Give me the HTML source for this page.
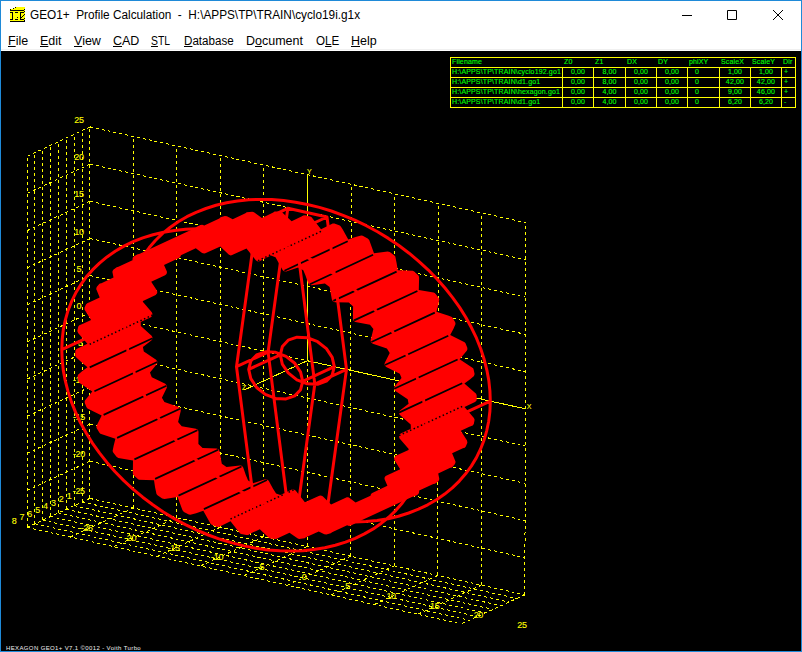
<!DOCTYPE html>
<html><head><meta charset="utf-8"><style>
html,body{margin:0;padding:0}
body{width:802px;height:652px;overflow:hidden;position:relative;background:#000;font-family:"Liberation Sans",sans-serif}
#tb{position:absolute;left:0;top:0;width:802px;height:51px;background:#fff}
.t{position:absolute;white-space:pre;color:#000;font-size:12px;line-height:14px}
.m{position:absolute;top:34px;white-space:pre;color:#000;font-size:12.5px;line-height:14px}
.u{text-decoration:underline;text-underline-offset:1px}
#tbl{position:absolute;left:450px;top:57px}
svg{position:absolute;left:0;top:0}
.bd{position:absolute;background:#1f8ad8}
</style></head><body>
<div id="tb"></div>
<svg width="802" height="652" viewBox="0 0 802 652">
<rect x="1" y="51" width="800" height="600" fill="#000"/>
<path d="M89.8,498.4L90,126.9M133.2,508L133.4,136.4M176.7,517.6L176.9,146M220.1,527.3L220.4,155.5M263.6,536.9L263.9,165.1M307.1,546.5L307.5,174.7M350.6,556.2L351.1,184.2M394.1,565.9L394.6,193.8M437.7,575.5L438.3,203.4M481.3,585.2L481.9,213M524.9,594.8L525.6,222.6M89.8,498.4L524.9,594.8M89.9,461.3L524.9,557.7M89.9,424.2L525,520.5M89.9,387L525.1,483.3M89.9,349.9L525.1,446.1M89.9,312.8L525.2,408.8M89.9,275.6L525.3,371.6M89.9,238.5L525.4,334.3M89.9,201.3L525.4,297.1M90,164.1L525.5,259.8M90,126.9L525.6,222.6M89.8,498.4L90,126.9M82,502L82.1,130.6M74.1,505.6L74.2,134.3M66.3,509.3L66.4,138M58.4,512.9L58.5,141.7M50.6,516.5L50.7,145.3M42.7,520.2L42.8,149M34.9,523.8L34.9,152.7M27.1,527.4L27.1,156.4M89.8,498.4L27.1,527.4M89.9,461.3L27.1,490.4M89.9,424.2L27.1,453.3M89.9,387L27.1,416.2M89.9,349.9L27.1,379.1M89.9,312.8L27.1,342M89.9,275.6L27.1,304.9M89.9,238.5L27.1,267.8M89.9,201.3L27.1,230.7M90,164.1L27.1,193.5M90,126.9L27.1,156.4M89.8,498.4L524.9,594.8M82,502L516.9,598.5M74.1,505.6L509,602.1M66.3,509.3L501.1,605.7M58.4,512.9L493.1,609.4M50.6,516.5L485.2,613M42.7,520.2L477.3,616.6M34.9,523.8L469.4,620.3M27.1,527.4L461.4,623.9M89.8,498.4L27.1,527.4M133.2,508L70.4,537M176.7,517.6L113.8,546.7M220.1,527.3L157.1,556.3M263.6,536.9L200.5,565.9M307.1,546.5L244,575.6M350.6,556.2L287.4,585.2M394.1,565.9L330.9,594.9M437.7,575.5L374.4,604.5M481.3,585.2L417.9,614.2M524.9,594.8L461.4,623.9" stroke="#ff0" stroke-width="1" stroke-dasharray="3 3" fill="none" shape-rendering="crispEdges"/>
<path d="M307.3,360.7L525.2,408.8M307.3,360.7L307.5,174.7M307.3,360.7L244.1,390" stroke="#ff0" stroke-width="1" fill="none" shape-rendering="crispEdges"/>
<g fill="#ff0" stroke="#ff0" stroke-width="0.1" font-size="9" letter-spacing="-0.35" font-family="Liberation Sans, sans-serif"><text x="78.8" y="494.4" text-anchor="middle">-25</text><text x="78.9" y="457.3" text-anchor="middle">-20</text><text x="78.9" y="420.2" text-anchor="middle">-15</text><text x="78.9" y="383" text-anchor="middle">-10</text><text x="78.9" y="345.9" text-anchor="middle">-5</text><text x="78.9" y="308.8" text-anchor="middle">0</text><text x="78.9" y="271.6" text-anchor="middle">5</text><text x="78.9" y="234.5" text-anchor="middle">10</text><text x="78.9" y="197.3" text-anchor="middle">15</text><text x="79" y="160.1" text-anchor="middle">20</text><text x="79" y="122.9" text-anchor="middle">25</text><text x="69" y="498.5" text-anchor="middle">1</text><text x="61.1" y="502.1" text-anchor="middle">2</text><text x="53.3" y="505.8" text-anchor="middle">3</text><text x="45.4" y="509.4" text-anchor="middle">4</text><text x="37.6" y="513" text-anchor="middle">5</text><text x="29.7" y="516.7" text-anchor="middle">6</text><text x="21.9" y="520.3" text-anchor="middle">7</text><text x="14.1" y="523.9" text-anchor="middle">8</text><text x="86.8" y="531.4" text-anchor="middle">-25</text><text x="130.2" y="541" text-anchor="middle">-20</text><text x="173.7" y="550.6" text-anchor="middle">-15</text><text x="217.1" y="560.3" text-anchor="middle">-10</text><text x="260.6" y="569.9" text-anchor="middle">-5</text><text x="304.1" y="579.5" text-anchor="middle">0</text><text x="347.6" y="589.2" text-anchor="middle">5</text><text x="391.1" y="598.9" text-anchor="middle">10</text><text x="434.7" y="608.5" text-anchor="middle">15</text><text x="478.3" y="618.2" text-anchor="middle">20</text><text x="521.9" y="627.8" text-anchor="middle">25</text><text x="526.7" y="409.3" font-size="7" letter-spacing="0">X</text><text x="307" y="173.7" font-size="7" letter-spacing="0">Y</text><text x="242.1" y="389.5" font-size="7" letter-spacing="0">Z</text></g>
<path d="M77,348.8L75.8,349.8L75.3,351L75.2,355.2L75.6,356.7L80.1,361L87.5,367.3L81.8,371.5L78,374.8L77.5,376.8L78.4,381.3L79.6,383L92.3,391.5L85.1,400.2L84.6,401.5L84.8,403.1L86.5,407.3L87.5,408.6L101.7,415.5L96.7,425.6L96.4,426.9L96.6,428L99.3,432.6L100.4,433.7L115.4,438.8L113.6,445.9L112.6,451.1L113.2,452.6L116.5,456.8L118.3,457.9L133,460.6L132.8,473L133,474.2L133.7,475.3L137.8,479.1L139,479.7L154,480.2L155.1,487.5L156.5,493.9L157.5,495.2L162.2,498.5L164.5,498.9L177.6,497.1L182.5,510.3L183.9,511.9L188.9,514.6L190.4,514.8L196.1,513.3L203.3,510.8L209,521.1L210.7,523.9L211.7,524.8L217.2,526.9L218.8,527L230.5,521.2L240.1,533.4L241.2,534L246.4,535.1L248.3,534.9L249.9,533.8L259.8,529.2L269.1,538L270.2,538.6L271.8,538.8L275.5,539L276.8,538.8L278.2,537.9L289.5,532.7L297.4,538.3L299.1,538.9L304.6,538.2L306,537.2L318.7,531.4L324.4,534.3L326.4,534.4L330.7,533.3L332.1,532.2L347.1,525.3L349.1,525.9L350.9,525.6L354.5,523.8L355.6,522.9L412.4,496.8L413.8,496.6L416.2,495.5L417.9,494.6L418.7,493.6L419.1,492.3L419.2,490.6L433.3,484.1L435,483.8L438.4,481.2L439.1,480.1L439.3,478.8L438.2,473.4L450.3,467.8L451.9,467.4L454.4,464.7L455.4,463.1L455.5,461.5L452.1,453.3L462.9,448.3L464.8,447.7L465.8,446.5L467.4,442.8L467,440.6L460.8,430.8L469.4,426.8L472.7,425.6L473.8,424.1L474.5,420.6L474.5,419.3L473.9,417.9L464.5,407L475,402L476.2,401L476.7,399.9L476.7,395.4L476.1,393.8L464.4,383.4L470.2,379.3L474,376L474.6,373.9L473.7,369.7L473.3,368.6L472.4,367.7L459.6,359.2L466.8,350.7L467.4,349.2L467.3,347.8L465.5,343.3L464.6,342.2L450.2,335.1L453.5,328.8L455.5,324L455.2,322.3L452.4,317.5L451.3,316.7L448.7,315.7L436.4,311.7L438.2,305.3L439.3,299.6L438.7,297.9L435.7,294L434.7,293.1L433.6,292.6L418.8,289.9L419.1,278.3L419,276.7L418.5,275.6L414.2,271.5L412.8,270.8L397.8,270.2L396.6,262.9L395.3,256.5L394.4,255.4L389.8,252.1L387.6,251.5L374,253.3L369.2,240L367.7,238.4L362.7,235.8L361.2,235.5L355.5,237.1L348.3,239.6L342.6,229.3L340.8,226.5L339.8,225.6L334.4,223.5L332.7,223.4L321,229.2L311.4,217L310.2,216.4L305.1,215.3L303.2,215.5L301.5,216.6L291.6,221.2L282.3,212.4L281.1,211.8L279.6,211.7L275.9,211.4L274.6,211.6L273.2,212.6L261.9,217.9L254,212.2L252.3,211.7L246.7,212.3L245.4,213.3L232.7,219.2L226.9,216.3L224.9,216.1L220.6,217.3L219.3,218.4L204.3,225.4L202.2,224.8L200.4,225L196.8,226.8L195.7,227.7L139.2,254.1L137.7,254.3L134,256.2L132.7,257.7L132.5,260.3L118.4,266.8L116.7,267.2L113.3,269.8L112.6,270.9L112.4,272.1L113.5,277.5L101.4,283.2L99.9,283.5L99,284.2L96.7,287.1L96.2,289L99.7,297.6L89,302.6L87.6,302.9L86.1,304.2L84.5,307.8L84.6,309.7L91.1,320.1L82.4,324.1L79.3,325.3L78.2,326.8L77.3,331L78.1,333L87.4,343.8ZM140.8,326.1L140.7,322L150.8,317.2L151.9,316.2L152.4,315L152.4,313.7L151.8,312.3L142.8,301.8L143,300.9L155.7,295L157.1,293.3L157.3,292L156.9,290.5L151.2,281.7L165.1,275.2L166.3,274.2L166.9,273L166.9,271.4L164,265L179,258L180.4,256.7L180.9,255.2L195.8,248.2L202.1,253.1L204.1,253.6L205.3,253.3L220.3,246.4L228.7,254.6L229.6,255.1L230.8,255.4L232.1,255.1L246.5,248.4L255.8,260.3L257.2,261.2L258.5,261.4L259.5,261.2L270.9,255.6L275.5,257.3L282.6,269.9L284,271.2L286.2,271.4L298.2,267.5L303.3,270.2L305.5,275.4L308.2,283.2L309.4,284.6L311.5,285.2L324.9,283.5L329.6,286.9L331.9,299.7L333,301.5L334.8,302.2L348.9,302.6L353.1,306.5L352.9,318.8L353.5,320.6L354.5,321.5L355.4,321.9L370,324.7L373.4,328.9L370.7,340L370.7,341.3L371.2,342.5L372.8,343.7L386.9,348.4L389.7,352.9L384.7,363L384.5,364.4L385,365.8L386.2,367L399.8,373.7L401.5,378.1L394.6,386.6L394.1,387.9L394.2,389.4L395.4,391L407.7,399.3L408.6,403.7L399.9,410.4L399.1,411.8L399,413.5L399.9,415.1L410.7,424.6L410.8,426.6L410.8,428.8L400.7,433.6L399.6,434.6L399.1,435.8L399.1,437.1L399.6,438.5L408.7,449L408.5,450L395.8,455.8L394.3,457.5L394.1,458.8L394.5,460.3L400.2,469.2L385.6,476.1L384.6,477.4L384.5,479.1L387.4,485.8L372.2,492.9L371,494.1L370.5,495.7L355.6,502.6L349.2,497.7L348.1,497.2L346.8,497.3L331.1,504.4L322.7,496.2L320.9,495.4L319.3,495.7L304.9,502.3L295.6,490.5L293.8,489.4L291.9,489.6L280.4,495.1L276.1,493.5L272.9,488.4L268.7,480.7L267,479.4L265.1,479.3L253.2,483.2L248.1,480.5L245.9,475.3L243.2,467.5L242.3,466.2L241.2,465.6L239.9,465.5L226.5,467.1L221.8,463.8L219.5,451L218.4,449.2L216.6,448.5L202.6,448L198.4,444.1L198.5,431.9L198.3,430.7L197.5,429.6L196,428.8L181.7,426.2L178.1,421.9L180.8,410.7L180.4,408.5L178.7,407L164.4,402.1L161.9,397.8L166.8,387.7L167,386.5L166.6,385.2L165.3,383.8L151.8,377.2L150.7,374.5L150,372.6L156.9,364.1L157.4,362.9L157.3,361.6L156.1,359.7L143.8,351.5L142.9,347.1L151.6,340.3L152.4,338.9L152.5,337.3L151.6,335.7Z" fill="#f00" fill-rule="evenodd"/>
<path d="M462.2,383.3L398.9,412.6M457.6,359.5L394.2,388.8M448.3,335.7L385,365M434.8,312.6L371.4,342M417.4,291L354.1,320.4M396.6,271.6L333.3,300.9M373.1,254.8L309.9,284.2M347.7,241.3L284.4,270.7M152.6,338.2L89.7,367.4M157.3,362L94.4,391.2M166.5,385.7L103.6,414.9M180,408.7L117.1,437.9M197.4,430.3L134.4,459.4M218.1,449.7L155.1,478.9M241.5,466.5L178.5,495.6M266.9,480L203.9,509.1" stroke="#000" stroke-width="1.8" fill="none"/>
<path d="M321,231.4L257.8,260.8M152.6,315L89.7,344.3M293.6,489.9L230.5,519M462.2,406.5L398.8,435.7" stroke="#000" stroke-width="1.5" stroke-dasharray="1.5 2.5" fill="none"/>
<path d="M490.3,401.1L489.9,390.8L488.8,380.4L486.8,369.8L484.1,359.3L480.7,348.7L476.5,338.2L471.5,327.8L465.9,317.5L459.6,307.4L452.6,297.6L445,288L436.8,278.7L428.1,269.8L418.8,261.3L409.1,253.2L398.9,245.5L388.4,238.4L377.5,231.8L366.3,225.7L354.8,220.2L343.1,215.3L331.3,211L319.4,207.4L307.4,204.5L295.5,202.2L283.6,200.5L271.8,199.6L260.1,199.4L248.7,199.8L237.5,201L226.6,202.8L216,205.3L205.9,208.5L196.1,212.3L186.9,216.7L178.2,221.8L170,227.5L162.4,233.7L155.4,240.5L149.1,247.8L143.5,255.5L138.6,263.8L134.4,272.4L130.9,281.4L128.2,290.8L126.2,300.4L125,310.3L124.6,320.4L125,330.7L126.2,341.1L128.1,351.6L130.8,362.2L134.3,372.7L138.5,383.2L143.4,393.6L149.1,403.8L155.4,413.9L162.3,423.7L169.9,433.3L178,442.6L186.7,451.5L196,460L205.7,468.1L215.8,475.7L226.3,482.9L237.2,489.5L248.4,495.5L259.8,501L271.5,505.9L283.3,510.2L295.2,513.9L307.1,516.8L319.1,519.1L331,520.8L342.8,521.7L354.4,522L365.9,521.6L377.1,520.5L388,518.7L398.5,516.2L408.7,513L418.5,509.2L427.7,504.8L436.5,499.8L444.7,494.1L452.3,487.9L459.3,481.1L465.6,473.8L471.3,466.1L476.3,457.9L480.5,449.2L484,440.2L486.7,430.8L488.7,421.2L489.9,411.3ZM426.9,430.4L426.5,420.1L425.4,409.6L423.4,399.1L420.7,388.6L417.3,378L413.1,367.5L408.1,357.1L402.5,346.9L396.2,336.8L389.2,326.9L381.6,317.4L373.5,308.1L364.7,299.2L355.5,290.7L345.8,282.6L335.6,274.9L325.1,267.8L314.2,261.2L303,255.1L291.6,249.6L279.9,244.7L268.1,240.5L256.2,236.9L244.3,233.9L232.3,231.6L220.4,230L208.6,229.1L197,228.8L185.6,229.3L174.4,230.4L163.5,232.2L153,234.7L142.8,237.9L133.1,241.7L123.9,246.1L115.2,251.2L107,256.9L99.5,263.1L92.5,269.9L86.2,277.1L80.6,284.9L75.7,293.1L71.5,301.7L68,310.7L65.3,320.1L63.3,329.7L62.2,339.6L61.8,349.7L62.2,360L63.3,370.4L65.3,380.9L68,391.4L71.4,401.9L75.6,412.4L80.5,422.8L86.2,433L92.4,443.1L99.4,452.9L106.9,462.4L115.1,471.7L123.8,480.6L133,489.1L142.7,497.2L152.8,504.8L163.3,512L174.2,518.6L185.4,524.6L196.8,530.1L208.4,535L220.2,539.3L232.1,542.9L244,545.9L255.9,548.2L267.8,549.9L279.6,550.8L291.2,551.1L302.7,550.7L313.9,549.5L324.8,547.7L335.3,545.3L345.5,542.1L355.2,538.3L364.4,533.9L373.2,528.9L381.4,523.2L389,517L395.9,510.3L402.3,503L407.9,495.2L412.9,487L417.1,478.4L420.6,469.4L423.3,460.1L425.3,450.4L426.5,440.5ZM124.6,320.4L61.8,349.7M490.3,401.1L426.9,430.4M346.5,369.4L327,217L287.8,208.3L268.1,352.1L287.5,504.3L326.7,513ZM314.8,384L295.4,231.7L256.3,223.1L236.5,366.7L256,518.9L295.1,527.6ZM346.5,369.4L314.8,384M327,217L295.4,231.7M287.8,208.3L256.3,223.1M268.1,352.1L236.5,366.7M287.5,504.3L256,518.9M326.7,513L295.1,527.6M334.3,366.7L332.2,357.4L326.4,348.6L317.6,341.7L307.3,337.7L297,337.2L288.2,340.2L282.4,346.4L280.3,354.8L282.3,364.1L288.2,372.8L296.9,379.8L307.3,383.8L317.6,384.3L326.3,381.2L332.2,375.1ZM302.7,381.3L300.6,372.1L294.8,363.3L286,356.4L275.7,352.3L265.4,351.8L256.6,354.9L250.8,361.1L248.7,369.4L250.8,378.7L256.6,387.5L265.3,394.4L275.7,398.4L286,398.9L294.7,395.9L300.6,389.7ZM280.3,354.8L248.7,369.4M334.3,366.7L302.7,381.3" stroke="#f00" stroke-width="3" fill="none" stroke-linejoin="round"/>
<path d="M450.5,57.5H795.5V107.5H450.5ZM450.5,67.5H795.5M450.5,77.5H795.5M450.5,87.5H795.5M450.5,97.5H795.5M562.5,67.5V107.5M593.5,67.5V107.5M625.5,67.5V107.5M656.5,67.5V107.5M687.5,67.5V107.5M719.5,67.5V107.5M750.5,67.5V107.5M781.5,67.5V107.5" stroke="#ff0" stroke-width="1" fill="none" shape-rendering="crispEdges"/>
<g fill="#0f0" stroke="#0f0" stroke-width="0.12" font-size="7" letter-spacing="0.15" font-family="Liberation Sans, sans-serif"><text x="452" y="64">Filename</text><text x="564" y="64">Z0</text><text x="595" y="64">Z1</text><text x="627" y="64">DX</text><text x="658" y="64">DY</text><text x="689" y="64">phiXY</text><text x="721" y="64">ScaleX</text><text x="752" y="64">ScaleY</text><text x="783" y="64">Dir</text><text x="452" y="74">H:\APPS\TP\TRAIN\cyclo192.go1</text><text x="578" y="74" text-anchor="middle">0,00</text><text x="609.5" y="74" text-anchor="middle">8,00</text><text x="641" y="74" text-anchor="middle">0,00</text><text x="672" y="74" text-anchor="middle">0,00</text><text x="697" y="74" text-anchor="middle">0</text><text x="735" y="74" text-anchor="middle">1,00</text><text x="766" y="74" text-anchor="middle">1,00</text><text x="784" y="74">+</text><text x="452" y="84">H:\APPS\TP\TRAIN\d1.go1</text><text x="578" y="84" text-anchor="middle">0,00</text><text x="609.5" y="84" text-anchor="middle">8,00</text><text x="641" y="84" text-anchor="middle">0,00</text><text x="672" y="84" text-anchor="middle">0,00</text><text x="697" y="84" text-anchor="middle">0</text><text x="735" y="84" text-anchor="middle">42,00</text><text x="766" y="84" text-anchor="middle">42,00</text><text x="784" y="84">+</text><text x="452" y="94">H:\APPS\TP\TRAIN\hexagon.go1</text><text x="578" y="94" text-anchor="middle">0,00</text><text x="609.5" y="94" text-anchor="middle">4,00</text><text x="641" y="94" text-anchor="middle">0,00</text><text x="672" y="94" text-anchor="middle">0,00</text><text x="697" y="94" text-anchor="middle">0</text><text x="735" y="94" text-anchor="middle">9,00</text><text x="766" y="94" text-anchor="middle">46,00</text><text x="784" y="94">+</text><text x="452" y="104">H:\APPS\TP\TRAIN\d1.go1</text><text x="578" y="104" text-anchor="middle">0,00</text><text x="609.5" y="104" text-anchor="middle">4,00</text><text x="641" y="104" text-anchor="middle">0,00</text><text x="672" y="104" text-anchor="middle">0,00</text><text x="697" y="104" text-anchor="middle">0</text><text x="735" y="104" text-anchor="middle">6,20</text><text x="766" y="104" text-anchor="middle">6,20</text><text x="784" y="104">-</text></g>
<text x="6" y="649.6" fill="#f0f0f0" font-size="6" letter-spacing="0.37" font-family="Liberation Sans, sans-serif">HEXAGON GEO1+ V7.1 &#169;0012 - Voith Turbo</text><path d="M682,15.5H692M727.5,10.5H736.5V19.5H727.5ZM773,10L783,20M783,10L773,20" stroke="#000" stroke-width="1" fill="none"/><g shape-rendering="crispEdges">
<path d="M10,10L16,7H25V22H10Z" fill="#ff0"/>
<path d="M10,10H24V11H10ZM10,12H13V13H10ZM20,12H24V13H20ZM12,12H13V20H12ZM20,12H21V20H20ZM10,19H13V20H10ZM20,19H24V20H20ZM10,21H25V22H10ZM15,12H18V13H15ZM15,19H18V20H15ZM17,17H18V18H17ZM10,9H11V10H10ZM13,8H14V9H13ZM15,7H16V8H15ZM24,9H25V10H24ZM24,11H25V12H24ZM24,14H25V15H24ZM23,15H24V16H23ZM22,16H23V17H22ZM21,17H22V18H21ZM24,18H25V19H24ZM24,20H25V21H24Z" fill="#000"/>
</g><rect x="1" y="49" width="800" height="1" fill="#f0f0f0"/>
</svg>
<div class="t" style="left:30px;top:8px;transform:scaleX(0.983);transform-origin:0 0">GEO1+  Profile Calculation  -  H:\APPS\TP\TRAIN\cyclo19i.g1x</div>
<div class="m" style="left:8px"><span class="u">F</span>ile</div>
<div class="m" style="left:40px"><span class="u">E</span>dit</div>
<div class="m" style="left:74px"><span class="u">V</span>iew</div>
<div class="m" style="left:113px"><span class="u">C</span>AD</div>
<div class="m" style="left:151px;transform:scaleX(0.83);transform-origin:0 0"><span class="u">S</span>TL</div>
<div class="m" style="left:184px;transform:scaleX(0.93);transform-origin:0 0"><span class="u">D</span>atabase</div>
<div class="m" style="left:246px">D<span class="u">o</span>cument</div>
<div class="m" style="left:316px;transform:scaleX(0.93);transform-origin:0 0">O<span class="u">L</span>E</div>
<div class="m" style="left:351px"><span class="u">H</span>elp</div>

<div class="bd" style="left:0;top:0;width:802px;height:1px"></div>
<div class="bd" style="left:0;top:651px;width:802px;height:1px"></div>
<div class="bd" style="left:0;top:0;width:1px;height:652px"></div>
<div class="bd" style="left:801px;top:0;width:1px;height:652px"></div>
</body></html>
